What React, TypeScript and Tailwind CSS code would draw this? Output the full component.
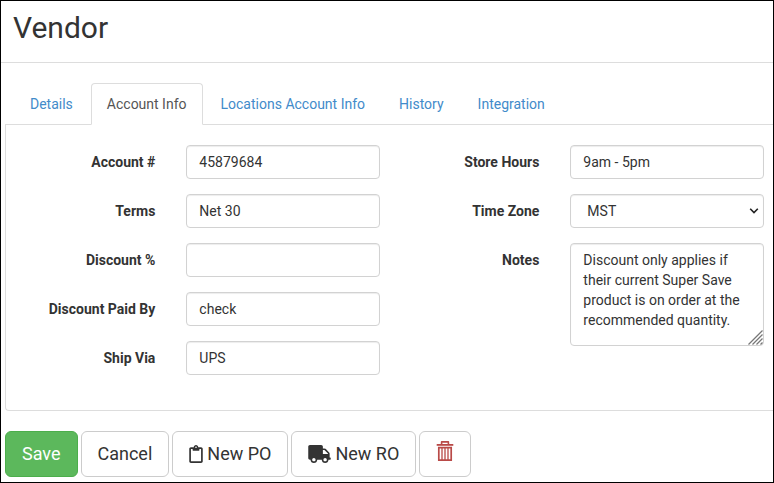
import React, { useState } from 'react';
import { FaRegClipboard, FaTruck } from 'react-icons/fa';

const tabs = [
  'Details',
  'Account Info',
  'Locations Account Info',
  'History',
  'Integration',
];

const control =
  'w-full rounded border border-[#d2d2d2] bg-white px-3 text-sm text-[#333333] shadow-[inset_0_1px_1px_rgba(0,0,0,0.075)] outline-none focus:border-[#66afe9]';

const button =
  'flex h-[46px] items-center rounded-md border px-4 text-lg leading-6';

function Field({ id, label, children }) {
  return (
    <div className="flex items-start">
      <label
        htmlFor={id}
        className="w-[39%] pt-[7px] text-right text-sm leading-5 font-bold"
      >
        {label}
      </label>
      <div className="relative mr-[9px] ml-[31px] flex flex-1">{children}</div>
    </div>
  );
}

function TextField({ id, label, value: initial }) {
  const [value, setValue] = useState(initial);

  return (
    <Field id={id} label={label}>
      <input
        id={id}
        type="text"
        value={value}
        onChange={(e) => setValue(e.target.value)}
        className={`${control} h-[34px]`}
      />
    </Field>
  );
}

function TrashIcon() {
  return (
    <svg
      viewBox="0 0 18 28"
      className="h-[28px] w-[18px]"
      fill="none"
      stroke="#b94a48"
      aria-hidden="true"
    >
      <path d="M0.7 4.9h16.6" strokeWidth="1.8" />
      <path d="M5.6 4.5V1.9h6.8v2.6" strokeWidth="1.6" strokeLinejoin="round" />
      <path d="M2.8 7.6h12.4v12.6H2.8z" strokeWidth="1.7" />
      <path d="M6 8v12M9 8v12M12 8v12" strokeWidth="1.3" />
    </svg>
  );
}

export default function App() {
  const [active, setActive] = useState('Account Info');
  const [zone, setZone] = useState('MST');
  const [notes, setNotes] = useState(
    'Discount only applies if their current Super Save product is on order at the recommended quantity.'
  );

  return (
    <div className="border border-black bg-white font-[Roboto,sans-serif] text-[#333333]">
      <h1 className="border-b border-[#dddddd] px-3 pt-[10px] pb-[18px] text-[30px] leading-[33px]">
        Vendor
      </h1>

      <main className="pt-5 pb-[5px] pl-1">
        <div
          role="tablist"
          className="flex gap-[2px] border-b border-[#dddddd] pl-[9px]"
        >
          {tabs.map((tab) => (
            <button
              key={tab}
              type="button"
              role="tab"
              aria-selected={tab === active}
              onClick={() => setActive(tab)}
              className={
                tab === active
                  ? '-mb-px rounded-t border border-[#dddddd] border-b-white bg-white px-[15px] py-[10px] text-sm leading-5 text-[#555555]'
                  : '-mb-px border border-transparent px-[15px] py-[10px] text-sm leading-5 text-[#428bca]'
              }
            >
              {tab}
            </button>
          ))}
        </div>

        <form>
          <div className="grid grid-cols-2 gap-x-px rounded-bl border-b border-l border-[#dddddd] pt-5 pb-[35px]">
            <div className="flex flex-col gap-[15px]">
              <TextField id="account" label="Account #" value="45879684" />
              <TextField id="terms" label="Terms" value="Net 30" />
              <TextField id="discount" label="Discount %" value="" />
              <TextField id="paid-by" label="Discount Paid By" value="check" />
              <TextField id="ship-via" label="Ship Via" value="UPS" />
            </div>

            <div className="flex flex-col gap-[15px]">
              <TextField id="hours" label="Store Hours" value="9am - 5pm" />
              <Field id="zone" label="Time Zone">
                <select
                  id="zone"
                  value={zone}
                  onChange={(e) => setZone(e.target.value)}
                  className={`${control} h-[34px] appearance-none pl-4`}
                >
                  <option>PST</option>
                  <option>MST</option>
                  <option>CST</option>
                  <option>EST</option>
                </select>
                <svg
                  viewBox="0 0 10 6"
                  className="pointer-events-none absolute top-[14px] right-[5px] h-[6px] w-[10px]"
                  fill="none"
                  stroke="#222222"
                  strokeWidth="1.6"
                  aria-hidden="true"
                >
                  <path d="M1.2 0.8L5 4.6l3.8-3.8" />
                </svg>
              </Field>
              <Field id="notes" label="Notes">
                <textarea
                  id="notes"
                  value={notes}
                  onChange={(e) => setNotes(e.target.value)}
                  className={`${control} h-[103px] resize-none py-[6px] leading-5`}
                />
                <svg
                  viewBox="0 0 15 15"
                  className="pointer-events-none absolute right-px bottom-px size-[15px]"
                  stroke="#777777"
                  strokeWidth="1.3"
                  aria-hidden="true"
                >
                  <path d="M0.5 14.5l14-14M4.5 14.5l10-10M8.5 14.5l6-6M12.5 14.5l2-2" />
                </svg>
              </Field>
            </div>
          </div>

          <div className="mt-5 flex gap-[3px]">
            <button
              type="button"
              className={`${button} border-[#4cae4c] bg-[#5cb85c] text-white`}
            >
              Save
            </button>
            <button type="button" className={`${button} border-[#cccccc]`}>
              Cancel
            </button>
            <button type="button" className={`${button} gap-1 border-[#cccccc]`}>
              <FaRegClipboard className="h-[18px] w-[14px]" />
              New PO
            </button>
            <button type="button" className={`${button} gap-1 border-[#cccccc]`}>
              <FaTruck className="h-[18px] w-[23px]" />
              New RO
            </button>
            <button
              type="button"
              aria-label="Delete"
              className={`${button} border-[#cccccc]`}
            >
              <TrashIcon />
            </button>
          </div>
        </form>
      </main>
    </div>
  );
}
